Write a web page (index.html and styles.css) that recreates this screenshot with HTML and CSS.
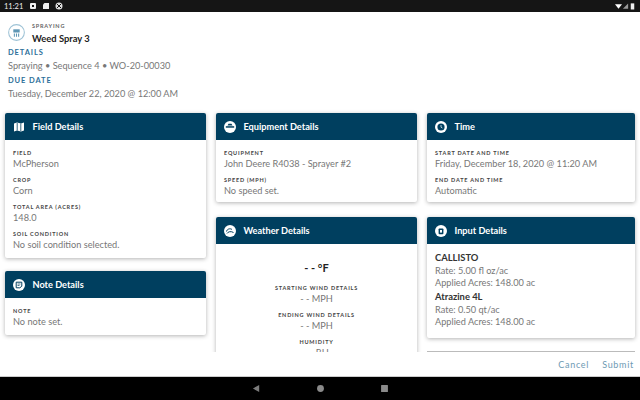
FILE: index.html
```html
<!DOCTYPE html>
<html lang="en">
<head>
<meta charset="utf-8">
<title>Weed Spray 3</title>
<link rel="stylesheet" href="styles.css">
</head>
<body>
<div class="device">
  <div class="status">
    <span class="clock">11:21</span>
    <svg class="st" viewBox="0 0 8 8"><rect x="1" y="1" width="6" height="6" rx="1" fill="#eee"/><rect x="3" y="3" width="2" height="2" fill="#111"/></svg>
    <svg class="st" viewBox="0 0 8 8"><path d="M2.5 1H7v6H1V2.5z" fill="#eee"/></svg>
    <svg class="st" viewBox="0 0 8 8"><circle cx="4" cy="4" r="3.5" fill="#ddd"/><path d="M2 2l4 4M6 2L2 6" stroke="#111" stroke-width="1"/></svg>
    <span class="grow"></span>
    <svg class="sr" viewBox="0 0 8 8"><path d="M0 2h8L4 7z" fill="#fff"/></svg>
    <svg class="sr" viewBox="0 0 8 8"><path d="M7 1v6H1z" fill="#999"/></svg>
    <svg class="sr" viewBox="0 0 8 8"><rect x="2" y="1" width="4" height="7" fill="#eee"/></svg>
  </div>
  <main class="scroll">
    <header class="top">
      <div class="title-row">
        <svg class="logo" viewBox="0 0 16 16"><circle cx="8" cy="8" r="7.4" fill="none" stroke="#9fc3d6" stroke-width="1"/><path d="M5 5h6v3H5z" fill="#5f97b5"/><path d="M6 9v3M8 9v3M10 9v3" stroke="#5f97b5" stroke-width="1"/></svg>
        <div>
          <div class="eyebrow">SPRAYING</div>
          <div class="name">Weed Spray 3</div>
        </div>
      </div>
      <div class="sec">DETAILS</div>
      <div class="val">Spraying • Sequence 4 • WO-20-00030</div>
      <div class="sec">DUE DATE</div>
      <div class="val">Tuesday, December 22, 2020 @ 12:00 AM</div>
    </header>
    <div class="cols">
      <div class="col col-a">
        <section class="card">
          <h2 class="head"><svg class="ic" viewBox="0 0 12 12"><path d="M1 2.5l3-1 4 1 3-1v8l-3 1-4-1-3 1z" fill="#fff"/><path d="M4.2 2v7.5M7.8 2.5V10" stroke="#003f5f" stroke-width=".8"/></svg>Field Details</h2>
          <div class="body">
            <div class="f"><div class="k">FIELD</div><div class="v">McPherson</div></div>
            <div class="f"><div class="k">CROP</div><div class="v">Corn</div></div>
            <div class="f"><div class="k">TOTAL AREA (ACRES)</div><div class="v">148.0</div></div>
            <div class="f"><div class="k">SOIL CONDITION</div><div class="v">No soil condition selected.</div></div>
          </div>
        </section>
        <section class="card">
          <h2 class="head"><svg class="ic" viewBox="0 0 12 12"><circle cx="6" cy="6" r="6" fill="#fff"/><path d="M3.2 3.2h5.6v4L6.8 8.8H3.2z" fill="none" stroke="#003f5f"/><path d="M4.5 5h3M4.5 6.5h2" stroke="#003f5f" stroke-width=".7"/></svg>Note Details</h2>
          <div class="body">
            <div class="f"><div class="k">NOTE</div><div class="v">No note set.</div></div>
          </div>
        </section>
      </div>
      <div class="col col-b">
        <section class="card">
          <h2 class="head"><svg class="ic" viewBox="0 0 12 12"><circle cx="6" cy="6" r="6" fill="#fff"/><rect x="1.8" y="5.2" width="8.4" height="1.5" fill="#003f5f"/><path d="M3.5 4.5L4.5 2.8h3l1 1.7z" fill="#003f5f"/></svg>Equipment Details</h2>
          <div class="body">
            <div class="f"><div class="k">EQUIPMENT</div><div class="v">John Deere R4038 - Sprayer #2</div></div>
            <div class="f"><div class="k">SPEED (MPH)</div><div class="v">No speed set.</div></div>
          </div>
        </section>
        <section class="card">
          <h2 class="head"><svg class="ic" viewBox="0 0 12 12"><circle cx="6" cy="6" r="6" fill="#fff"/><path d="M2.5 6.5C3 4 6 3 8 4.5M3 8.5C4 6.5 7 6 9.5 7.5" fill="none" stroke="#003f5f"/></svg>Weather Details</h2>
          <div class="body center">
            <div class="temp">- - °F</div>
            <div class="f"><div class="k">STARTING WIND DETAILS</div><div class="v">- - MPH</div></div>
            <div class="f"><div class="k">ENDING WIND DETAILS</div><div class="v">- - MPH</div></div>
            <div class="f"><div class="k">HUMIDITY</div><div class="v">- - RH</div></div>
          </div>
        </section>
      </div>
      <div class="col col-c">
        <section class="card">
          <h2 class="head"><svg class="ic" viewBox="0 0 12 12"><circle cx="6" cy="6" r="6" fill="#fff"/><circle cx="6" cy="6" r="3.6" fill="#003f5f"/><path d="M6 4v2.2l1.4.8" fill="none" stroke="#fff" stroke-width=".7"/></svg>Time</h2>
          <div class="body">
            <div class="f"><div class="k">START DATE AND TIME</div><div class="v">Friday, December 18, 2020 @ 11:20 AM</div></div>
            <div class="f"><div class="k">END DATE AND TIME</div><div class="v">Automatic</div></div>
          </div>
        </section>
        <section class="card">
          <h2 class="head"><svg class="ic" viewBox="0 0 12 12"><circle cx="6" cy="6" r="6" fill="#fff"/><rect x="3.6" y="3.4" width="4.8" height="5.8" rx=".8" fill="#003f5f"/><rect x="5" y="5" width="2" height="2.6" fill="#fff"/></svg>Input Details</h2>
          <div class="body-input">
            <div class="input"><div class="prod">CALLISTO</div><div class="v v-tight">Rate: 5.00 fl oz/ac</div><div class="v v-tight">Applied Acres: 148.00 ac</div></div>
            <div class="input"><div class="prod">Atrazine 4L</div><div class="v v-tight">Rate: 0.50 qt/ac</div><div class="v v-tight">Applied Acres: 148.00 ac</div></div>
          </div>
        </section>
        <div class="next"></div>
      </div>
    </div>
  </main>
  <footer class="actions">
    <span class="btn">Cancel</span>
    <span class="btn">Submit</span>
  </footer>
  <nav class="navbar">
    <svg class="nb" viewBox="0 0 10 10"><path d="M8 1v8L1 5z" fill="#7b7b7b"/></svg>
    <svg class="nb" viewBox="0 0 10 10"><circle cx="5" cy="5" r="3.8" fill="#8a8a8a"/></svg>
    <svg class="nb" viewBox="0 0 10 10"><rect x="1.2" y="1.2" width="7.6" height="7.6" rx=".6" fill="#8a8a8a"/></svg>
  </nav>
</div>
</body>
</html>
```
FILE: styles.css
```css
* { box-sizing: border-box; }
html, body { margin: 0; height: 100%; }
body { font-family: "Lato", "Open Sans", sans-serif; background: #fff; color: #6e6e6e; }
.device { width: 640px; height: 400px; display: flex; flex-direction: column; overflow: hidden; }
.status { height: 12px; flex: none; background: #151515; color: #eee; display: flex; align-items: center; padding: 0 4px; gap: 5px; font-size: 7.5px; }
.clock { margin-right: 1px; }
.st { width: 8px; height: 8px; }
.sr { width: 7px; height: 8px; margin-left: -5px; }
.grow { flex: 1; }
.scroll { flex: 1; min-height: 0; overflow: hidden; }
.top { padding: 9px 8px 0; height: 101px; }
.title-row { display: flex; gap: 7px; height: 27px; }
.logo { width: 17px; height: 17px; margin-top: 3px; }
.eyebrow { font-size: 5.5px; font-weight: 700; letter-spacing: .8px; color: #666; line-height: 8px; margin-top: 1px; }
.name { font-size: 9.4px; font-weight: 700; color: #222; line-height: 12px; margin-top: 3px; }
.sec { font-size: 7.5px; font-weight: 700; letter-spacing: .9px; color: #2c6f9a; line-height: 10px; }
.val { font-size: 9.2px; line-height: 14px; margin: 1px 0 3px; color: #777; }
.cols { display: flex; padding: 0 5px; gap: 10px; align-items: flex-start; }
.col { display: flex; flex-direction: column; gap: 15px; }
.col-a { width: 201px; gap: 13px; }
.col-b { width: 201px; }
.col-c { width: 208px; }
.card { background: #fff; border-radius: 2px; box-shadow: 0 1px 4px rgba(0,0,0,.3); }
.head { margin: 0; height: 27px; background: #003f5f; color: #fff; display: flex; align-items: center; gap: 7.5px; padding: 0 8px; font-size: 9.2px; font-weight: 700; border-radius: 2px 2px 0 0; }
.ic { width: 12px; height: 12px; }
.body { padding: 10px 8px 0; }
.col-a .body { padding-bottom: 2px; }
.f { margin-bottom: 7px; }
.f:last-child { margin-bottom: 5px; }
.k { font-size: 5.5px; font-weight: 700; letter-spacing: .8px; color: #444; line-height: 7px; }
.v { font-size: 9.2px; line-height: 13px; color: #777; }
.v-tight { line-height: 11.5px; }
.center { text-align: center; padding-top: 17px; }
.temp { font-size: 11px; font-weight: 700; color: #222; line-height: 14px; margin-bottom: 10px; }
.body-input { padding: 8px 8px; }
.input { margin-bottom: 3px; }
.prod { font-size: 9.4px; font-weight: 700; color: #333; line-height: 12px; margin-bottom: 1px; }
.next { height: 10px; margin-top: -2px; border-top: 1px solid #bbb; }
.actions { height: 24px; flex: none; display: flex; justify-content: flex-end; align-items: center; gap: 13px; padding: 0 6px; }
.btn { font-size: 9px; letter-spacing: .7px; color: #6d9ab3; }
.navbar { height: 24px; flex: none; background: #000; display: flex; justify-content: center; align-items: center; gap: 55px; border-top: 1px solid #ccc; }
.nb { width: 9px; height: 9px; }
```
